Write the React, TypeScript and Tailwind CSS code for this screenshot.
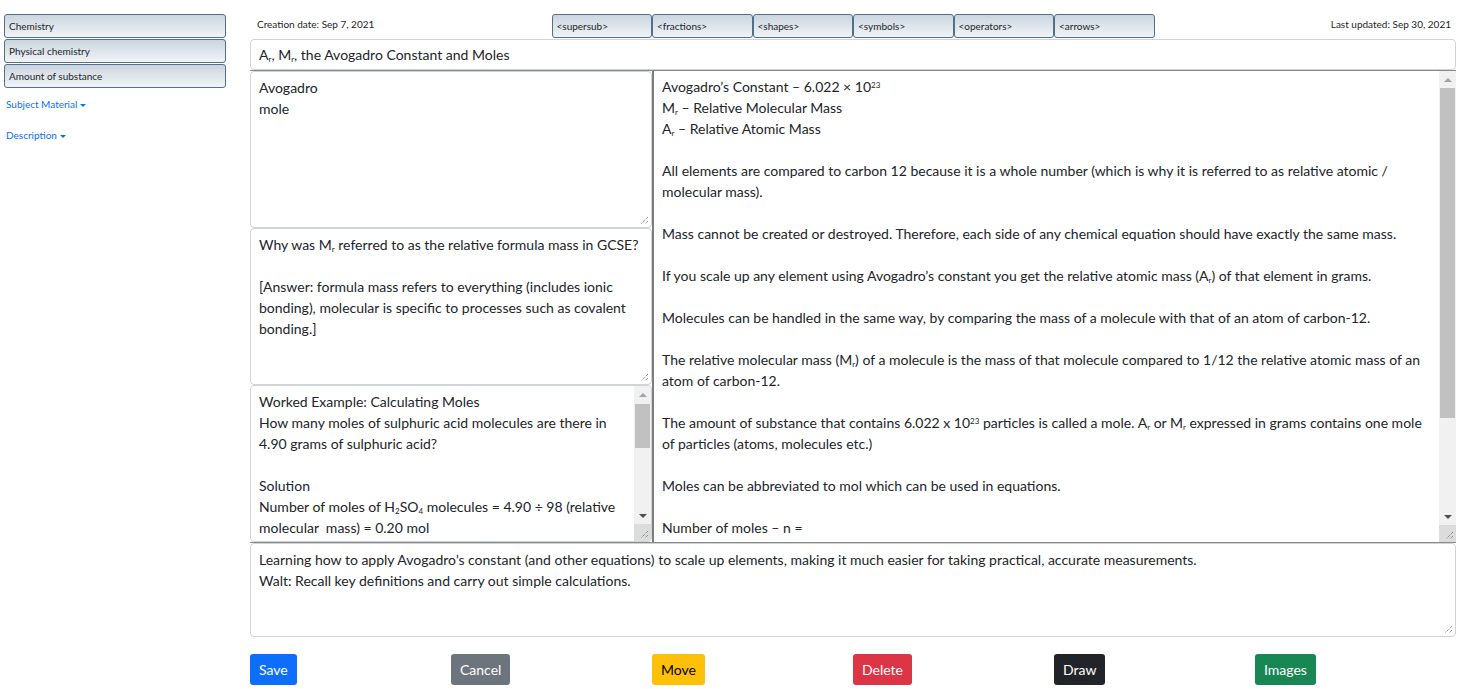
const crumbs = ['Chemistry', 'Physical chemistry', 'Amount of substance']
const tools = ['<supersub>', '<fractions>', '<shapes>', '<symbols>', '<operators>', '<arrows>']

const Sub = ({ children }: { children: React.ReactNode }) => <sub className="text-[8px]">{children}</sub>
const Sup = ({ children }: { children: React.ReactNode }) => <sup className="text-[8px]">{children}</sup>

const Grip = () => (
    <svg className="absolute bottom-[2px] right-[2px]" width="10" height="10" viewBox="0 0 10 10">
        <path d="M9 2 L2 9 M9 6 L6 9" stroke="#6b6b6b" strokeWidth="1" strokeDasharray="1 1" />
    </svg>
)

const Arrow = ({ up }: { up?: boolean }) => (
    <div className="h-[17px] flex items-center justify-center">
        {up ? (
            <div className="w-0 h-0 border-x-[4px] border-x-transparent border-b-[4px] border-b-[#a3a3a3]" />
        ) : (
            <div className="w-0 h-0 border-x-[4px] border-x-transparent border-t-[4px] border-t-[#505050]" />
        )}
    </div>
)

const Scrollbar = ({ thumb }: { thumb: string }) => (
    <div className="w-[17px] shrink-0 flex flex-col bg-[#f1f1f1]">
        <Arrow up />
        <div className={`mx-[1px] bg-[#c1c1c1] ${thumb}`} />
        <div className="flex-1" />
        <Arrow />
        <div className="relative h-[17px] bg-[#dcdcdc]">
            <Grip />
        </div>
    </div>
)

const ToolButton = ({ label }: { label: string }) => (
    <div className="h-[24px] flex items-center pl-[4px] border border-[#52708c] rounded-[3px] bg-linear-to-b from-[#cbd5df] to-[#f1f4f7] text-[10px] text-[#212529] whitespace-nowrap">
        {label}
    </div>
)

const Caret = () => (
    <span className="inline-block ml-[3px] align-middle w-0 h-0 border-x-[3px] border-x-transparent border-t-[3px] border-t-current" />
)

const buttons = [
    { label: 'Save', cls: 'bg-[#0d6efd] text-white' },
    { label: 'Cancel', cls: 'bg-[#6c757d] text-white' },
    { label: 'Move', cls: 'bg-[#ffc107] text-black' },
    { label: 'Delete', cls: 'bg-[#dc3545] text-white' },
    { label: 'Draw', cls: 'bg-[#212529] text-white' },
    { label: 'Images', cls: 'bg-[#198754] text-white' },
]

export default function App() {
    return (
        <div className="flex gap-[24px] pt-[14px] pl-[4px] pr-[5px] bg-white text-[#212529] font-['Lato',sans-serif]">
            {/* sidebar */}
            <div className="w-[222px] shrink-0">
                <div className="flex flex-col gap-[1px]">
                    {crumbs.map((c) => (
                        <ToolButton key={c} label={c} />
                    ))}
                </div>
                <div className="pl-[2px] pt-[1px] text-[10px] leading-[15px] text-[#0d6efd]">
                    <div className="py-[8px]">Subject Material<Caret /></div>
                    <div className="py-[8px]">Description<Caret /></div>
                </div>
            </div>

            {/* main */}
            <div className="flex-1 min-w-0">
                <div className="grid grid-cols-12 h-[25px]">
                    <div className="col-span-3 pl-[7px] pt-[3px] text-[10px] leading-[15px]">Creation date: Sep 7, 2021</div>
                    {tools.map((t) => (
                        <ToolButton key={t} label={t} />
                    ))}
                    <div className="col-span-3 pr-[5px] pt-[3px] text-right text-[10px] leading-[15px]">Last updated: Sep 30, 2021</div>
                </div>

                <div className="h-[31px] flex items-center px-[8px] border border-[#ced4da] rounded-[4px] text-[14px]">
                    <span>A<Sub>r</Sub>, M<Sub>r</Sub>, the Avogadro Constant and Moles</span>
                </div>

                <div className="grid grid-cols-12 border-t border-b border-[#8a8a8a] text-[14px] leading-[21px]">
                    <div className="col-span-4 flex flex-col">
                        <div className="relative h-[157px] border border-[#ced4da] rounded-[4px] px-[8px] py-[5px]">
                            Avogadro<br />
                            mole
                            <Grip />
                        </div>
                        <div className="relative h-[157px] border border-[#ced4da] rounded-[4px] px-[8px] py-[5px] whitespace-nowrap">
                            Why was M<Sub>r</Sub> referred to as the relative formula mass in GCSE?<br />
                            <br />
                            [Answer: formula mass refers to everything (includes ionic<br />
                            bonding), molecular is specific to processes such as covalent<br />
                            bonding.]
                            <Grip />
                        </div>
                        <div className="flex h-[157px] border border-[#ced4da] rounded-[4px] overflow-hidden">
                            <div className="flex-1 px-[8px] pt-[5px] overflow-hidden whitespace-nowrap">
                                Worked Example: Calculating Moles<br />
                                How many moles of sulphuric acid molecules are there in<br />
                                4.90 grams of sulphuric acid?<br />
                                <br />
                                Solution<br />
                                Number of moles of H<Sub>2</Sub>SO<Sub>4</Sub> molecules = 4.90 ÷ 98 (relative<br />
                                molecular&nbsp; mass) = 0.20 mol<br />
                                <br />
                                Mass of 1 mole of H<Sub>2</Sub>SO<Sub>4</Sub> = 98 g
                            </div>
                            <Scrollbar thumb="h-[44px] mt-[1px]" />
                        </div>
                    </div>

                    <div className="col-span-8 flex h-[471px] border-l-2 border-[#7d7d7d]">
                        <div className="flex-1 pl-[8px] pt-[5px] overflow-hidden whitespace-nowrap">
                            Avogadro’s Constant – 6.022 × 10<Sup>23</Sup><br />
                            M<Sub>r</Sub> – Relative Molecular Mass<br />
                            A<Sub>r</Sub> – Relative Atomic Mass<br />
                            <br />
                            All elements are compared to carbon 12 because it is a whole number (which is why it is referred to as relative atomic /<br />
                            molecular mass).<br />
                            <br />
                            Mass cannot be created or destroyed. Therefore, each side of any chemical equation should have exactly the same mass.<br />
                            <br />
                            If you scale up any element using Avogadro’s constant you get the relative atomic mass (A<Sub>r</Sub>) of that element in grams.<br />
                            <br />
                            Molecules can be handled in the same way, by comparing the mass of a molecule with that of an atom of carbon-12.<br />
                            <br />
                            The relative molecular mass (M<Sub>r</Sub>) of a molecule is the mass of that molecule compared to 1/12 the relative atomic mass of an<br />
                            atom of carbon-12.<br />
                            <br />
                            The amount of substance that contains 6.022 x 10<Sup>23</Sup> particles is called a mole. A<Sub>r</Sub> or M<Sub>r</Sub> expressed in grams contains one mole<br />
                            of particles (atoms, molecules etc.)<br />
                            <br />
                            Moles can be abbreviated to mol which can be used in equations.<br />
                            <br />
                            Number of moles – n =<br />
                            mass (g) ÷ M<Sub>r</Sub>
                        </div>
                        <Scrollbar thumb="h-[330px]" />
                    </div>
                </div>

                <div className="relative h-[94px] border border-[#ced4da] rounded-[4px] px-[8px] py-[5px] text-[14px] leading-[21px]">
                    <div>Learning how to apply Avogadro’s constant (and other equations) to scale up elements, making it much easier for taking practical, accurate measurements.</div>
                    <div>Walt: Recall key definitions and carry out simple calculations.</div>
                    <Grip />
                </div>

                <div className="grid grid-cols-6 mt-[17px]">
                    {buttons.map((b) => (
                        <div key={b.label} className="justify-self-start">
                            <button className={`h-[31px] px-[9px] rounded-[3px] text-[14px] leading-[21px] ${b.cls}`}>{b.label}</button>
                        </div>
                    ))}
                </div>
            </div>
        </div>
    )
}
